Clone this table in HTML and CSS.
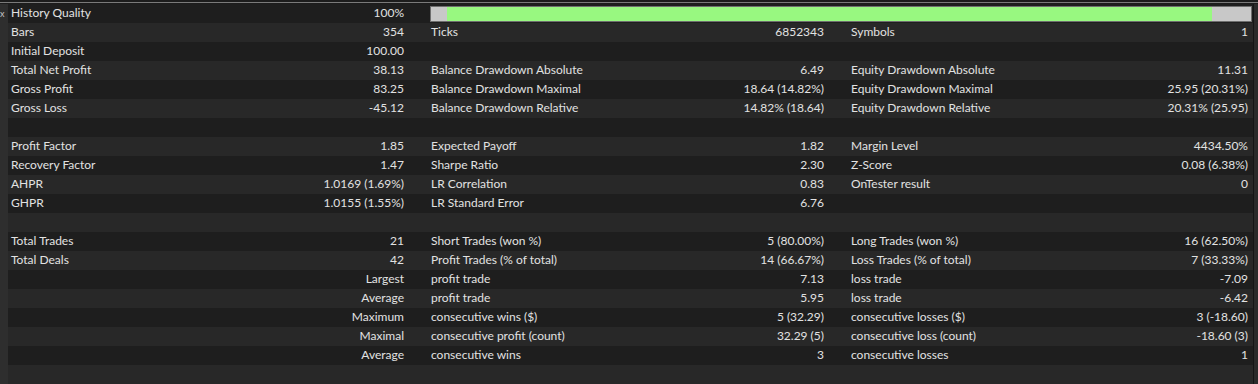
FILE: index.html
```html
<!DOCTYPE html>
<html>
<head>
<meta charset="utf-8">
<link rel="stylesheet" href="styles.css">
</head>
<body>
<div class="frame">
  <div class="side-left"><span class="close">x</span></div>
  <div class="report">
    <div class="row dark">
      <div class="lbl">History Quality</div><div class="val">100%</div>
      <div class="barcell"><div class="bar"><div class="bar-fill"></div></div></div>
    </div>
    <div class="row light">
      <div class="lbl">Bars</div><div class="val">354</div>
      <div class="lbl">Ticks</div><div class="val">6852343</div>
      <div class="lbl">Symbols</div><div class="val last">1</div>
    </div>
    <div class="row dark">
      <div class="lbl">Initial Deposit</div><div class="val">100.00</div>
      <div class="lbl"></div><div class="val"></div>
      <div class="lbl"></div><div class="val last"></div>
    </div>
    <div class="row light">
      <div class="lbl">Total Net Profit</div><div class="val">38.13</div>
      <div class="lbl">Balance Drawdown Absolute</div><div class="val">6.49</div>
      <div class="lbl">Equity Drawdown Absolute</div><div class="val last">11.31</div>
    </div>
    <div class="row dark">
      <div class="lbl">Gross Profit</div><div class="val">83.25</div>
      <div class="lbl">Balance Drawdown Maximal</div><div class="val">18.64 (14.82%)</div>
      <div class="lbl">Equity Drawdown Maximal</div><div class="val last">25.95 (20.31%)</div>
    </div>
    <div class="row light">
      <div class="lbl">Gross Loss</div><div class="val">-45.12</div>
      <div class="lbl">Balance Drawdown Relative</div><div class="val">14.82% (18.64)</div>
      <div class="lbl">Equity Drawdown Relative</div><div class="val last">20.31% (25.95)</div>
    </div>
    <div class="row dark"></div>
    <div class="row light">
      <div class="lbl">Profit Factor</div><div class="val">1.85</div>
      <div class="lbl">Expected Payoff</div><div class="val">1.82</div>
      <div class="lbl">Margin Level</div><div class="val last">4434.50%</div>
    </div>
    <div class="row dark">
      <div class="lbl">Recovery Factor</div><div class="val">1.47</div>
      <div class="lbl">Sharpe Ratio</div><div class="val">2.30</div>
      <div class="lbl">Z-Score</div><div class="val last">0.08 (6.38%)</div>
    </div>
    <div class="row light">
      <div class="lbl">AHPR</div><div class="val">1.0169 (1.69%)</div>
      <div class="lbl">LR Correlation</div><div class="val">0.83</div>
      <div class="lbl">OnTester result</div><div class="val last">0</div>
    </div>
    <div class="row dark">
      <div class="lbl">GHPR</div><div class="val">1.0155 (1.55%)</div>
      <div class="lbl">LR Standard Error</div><div class="val">6.76</div>
      <div class="lbl"></div><div class="val last"></div>
    </div>
    <div class="row light"></div>
    <div class="row dark">
      <div class="lbl">Total Trades</div><div class="val">21</div>
      <div class="lbl">Short Trades (won %)</div><div class="val">5 (80.00%)</div>
      <div class="lbl">Long Trades (won %)</div><div class="val last">16 (62.50%)</div>
    </div>
    <div class="row light">
      <div class="lbl">Total Deals</div><div class="val">42</div>
      <div class="lbl">Profit Trades (% of total)</div><div class="val">14 (66.67%)</div>
      <div class="lbl">Loss Trades (% of total)</div><div class="val last">7 (33.33%)</div>
    </div>
    <div class="row dark">
      <div class="lbl"></div><div class="val">Largest</div>
      <div class="lbl">profit trade</div><div class="val">7.13</div>
      <div class="lbl">loss trade</div><div class="val last">-7.09</div>
    </div>
    <div class="row light">
      <div class="lbl"></div><div class="val">Average</div>
      <div class="lbl">profit trade</div><div class="val">5.95</div>
      <div class="lbl">loss trade</div><div class="val last">-6.42</div>
    </div>
    <div class="row dark">
      <div class="lbl"></div><div class="val">Maximum</div>
      <div class="lbl">consecutive wins ($)</div><div class="val">5 (32.29)</div>
      <div class="lbl">consecutive losses ($)</div><div class="val last">3 (-18.60)</div>
    </div>
    <div class="row light">
      <div class="lbl"></div><div class="val">Maximal</div>
      <div class="lbl">consecutive profit (count)</div><div class="val">32.29 (5)</div>
      <div class="lbl">consecutive loss (count)</div><div class="val last">-18.60 (3)</div>
    </div>
    <div class="row dark">
      <div class="lbl"></div><div class="val">Average</div>
      <div class="lbl">consecutive wins</div><div class="val">3</div>
      <div class="lbl">consecutive losses</div><div class="val last">1</div>
    </div>
    <div class="row light"></div>
  </div>
  <div class="side-right"></div>
</div>
</body>
</html>
```

FILE: styles.css
```css
html, body {
  margin: 0;
  padding: 0;
  background: #1c1c1c;
  overflow: hidden;
}

.frame {
  display: flex;
  width: 1258px;
  height: 384px;
  padding-top: 4px;
  box-sizing: border-box;
  position: relative;
  font-family: "Segoe UI", Lato, "Liberation Sans", sans-serif;
  font-size: 12px;
  color: #e2e2e2;
}

.frame::before {
  content: "";
  position: absolute;
  left: 0;
  right: 0;
  top: 2px;
  height: 1px;
  background: #7a7a7a;
}

.side-left {
  width: 8px;
  flex: none;
  background: #2e2e2e;
  overflow: hidden;
  position: relative;
}

.close {
  position: absolute;
  left: 0;
  top: 0;
  font-size: 9px;
  color: #c8c8c8;
  line-height: 19px;
}

.side-right {
  width: 5px;
  flex: none;
  background: #2a2a2a;
  border-left: 1px solid #151515;
  box-sizing: border-box;
}

.report {
  flex: 1;
  display: flex;
  flex-direction: column;
}

.row {
  height: 19px;
  flex: none;
  display: grid;
  grid-template-columns: 210px 210px 210px 210px 210px 195px;
  line-height: 18px;
  white-space: nowrap;
}

.dark { background: #1e1e1e; }
.light { background: #282828; }

.lbl {
  padding-left: 3px;
}

.val {
  text-align: right;
  padding-right: 24px;
}

.val.last {
  padding-right: 5px;
}

.barcell {
  grid-column: 3 / 7;
  padding: 2px 1px 1px 2px;
}

.bar {
  height: 14px;
  border: 1px solid #6e6e6e;
  background: #c8c8c8;
  padding: 0 39px 0 16px;
}

.bar-fill {
  height: 100%;
  background: #98f880;
}
```
